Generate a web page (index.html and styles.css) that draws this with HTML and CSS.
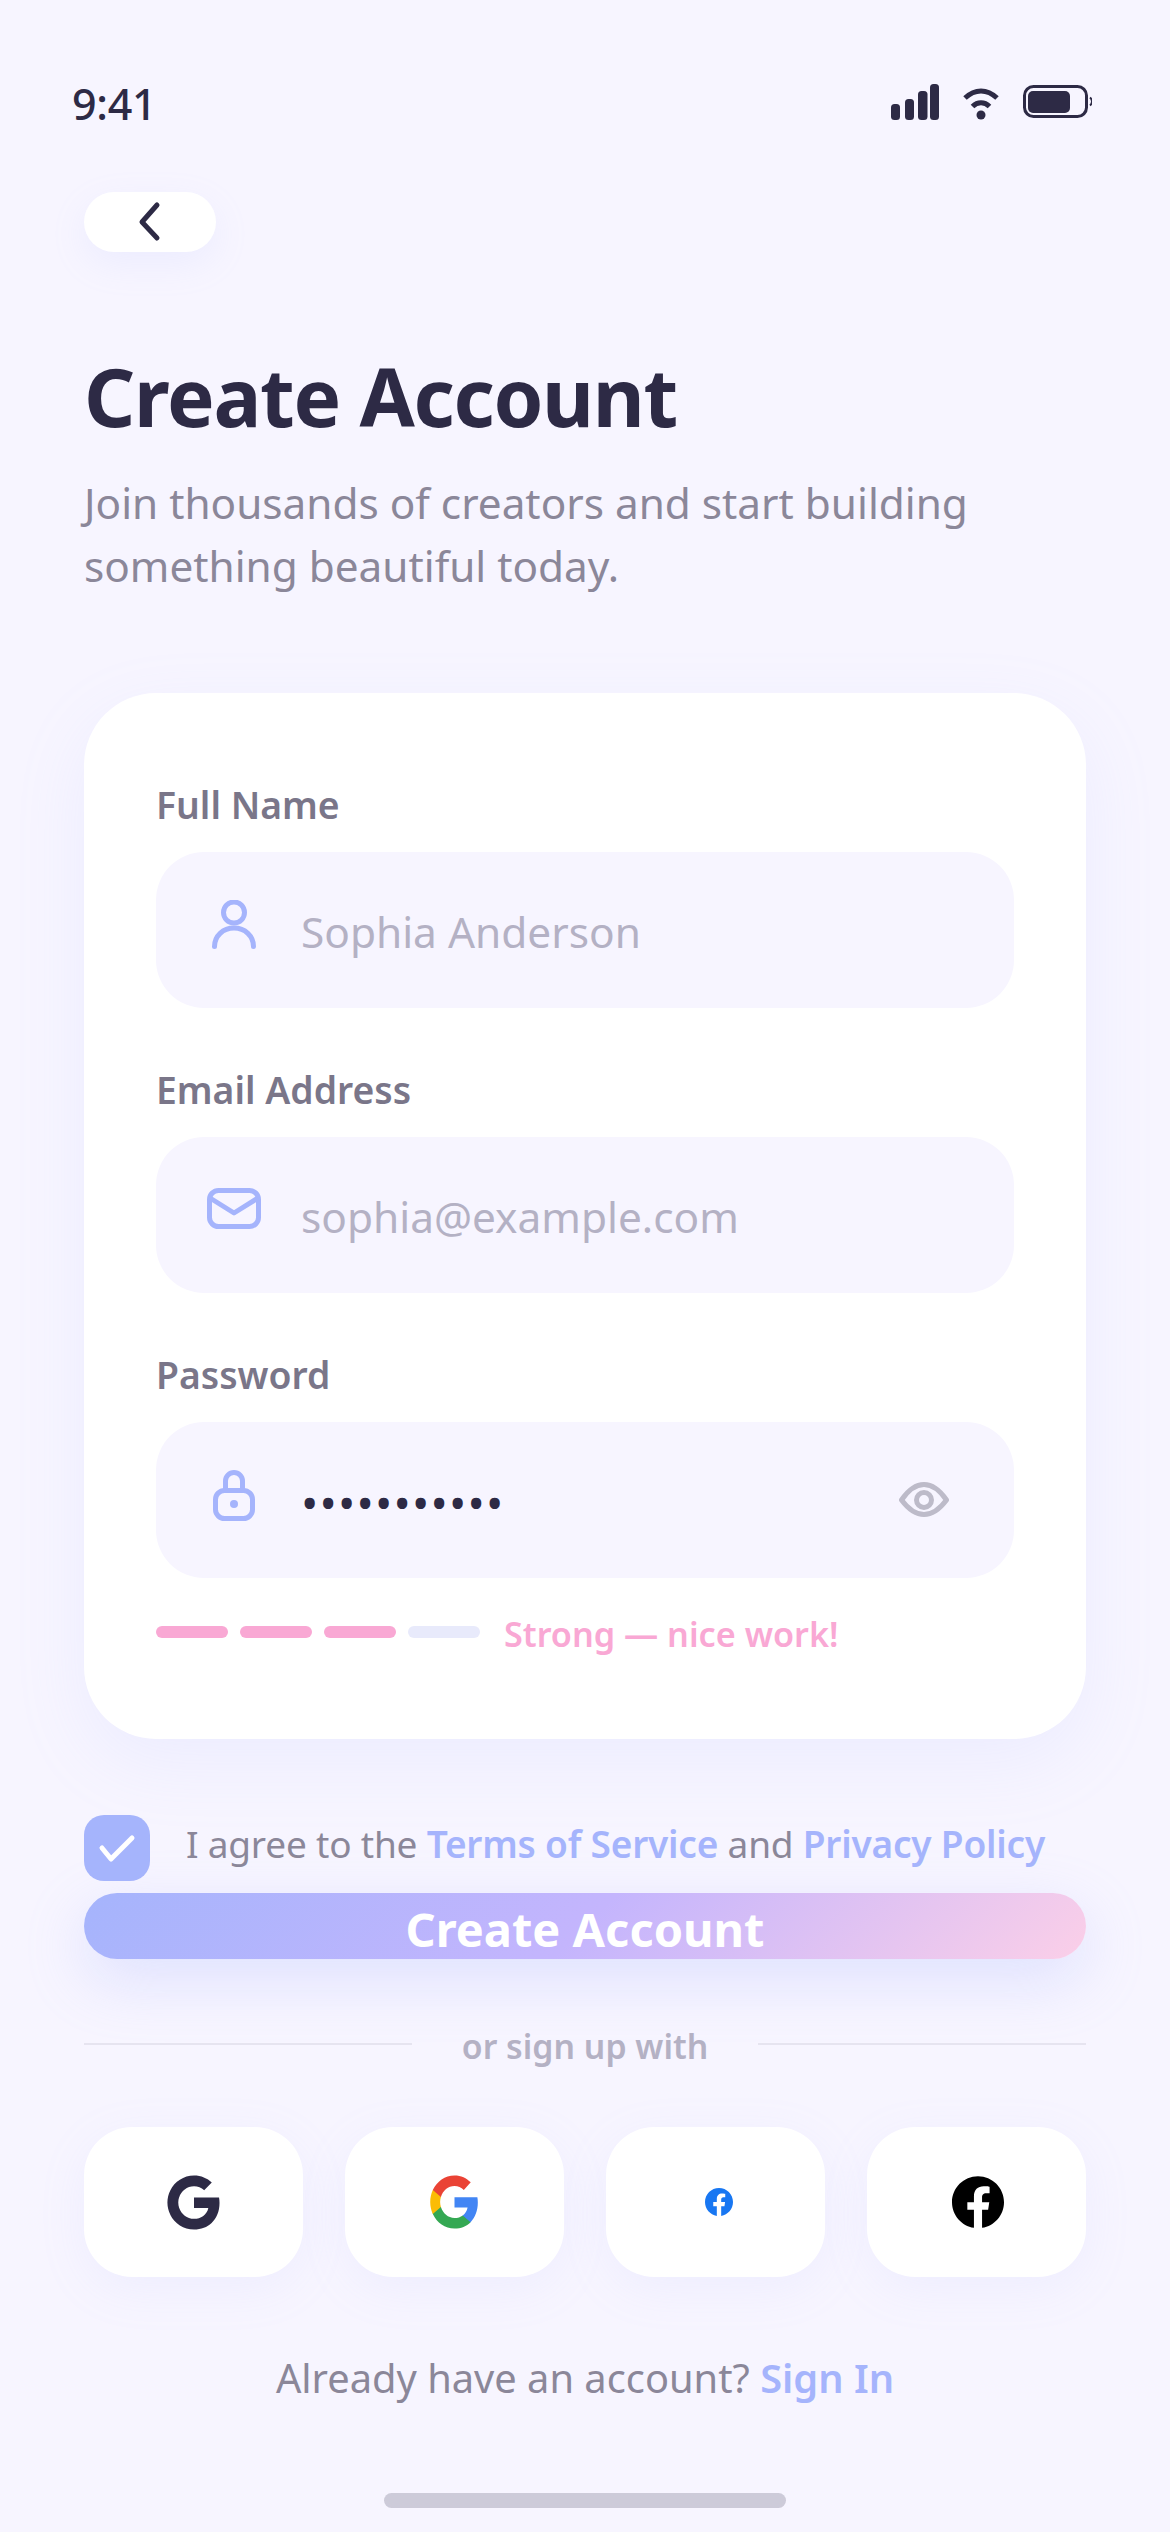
FILE: index.html
```html
<!DOCTYPE html>
<html lang="en">
<head>
<meta charset="utf-8">
<title>Create Account</title>
<link rel="stylesheet" href="styles.css">
</head>
<body>
<div class="screen">
  <header class="status">
    <span class="time">9:41</span>
    <div class="status-icons">
      <svg width="48" height="36" viewBox="0 0 48 36"><g fill="#2D2A45"><rect x="0" y="20" width="9" height="16" rx="3.5"/><rect x="14" y="15" width="9" height="21" rx="3.5"/><rect x="27" y="7" width="9.5" height="29" rx="3.5"/><rect x="39" y="0" width="9" height="36" rx="3.5"/></g></svg>
      <svg width="36" height="36" viewBox="0 0 36 36"><g fill="none" stroke="#2D2A45" stroke-width="5"><path d="M2 14C12 4.5 24 4.5 34 14"/><path d="M9.5 22.5C14.5 17.5 21.5 17.5 26.5 22.5"/></g><circle cx="18" cy="31" r="4.5" fill="#2D2A45"/></svg>
      <svg width="69" height="36" viewBox="0 0 69 36"><rect x="1.5" y="2.5" width="62" height="30" rx="9" fill="none" stroke="#2D2A45" stroke-width="3"/><rect x="5" y="7" width="42" height="22" rx="5" fill="#2D2A45"/><path d="M67 13.500a5 5 0 0 1 0 8" fill="none" stroke="#2D2A45" stroke-width="2"/></svg>
    </div>
  </header>

  <main class="content">
    <button class="back" type="button" aria-label="Back">
      <svg width="30" height="42" viewBox="0 0 30 42"><path d="M22 4 7 21l15 16" fill="none" stroke="#2D2A45" stroke-width="5" stroke-linecap="round" stroke-linejoin="round"/></svg>
    </button>

    <h1 class="title">Create Account</h1>
    <p class="subtitle">Join thousands of creators and start building<br>something beautiful today.</p>

    <section class="card">
      <div class="field">
        <div class="label">Full Name</div>
        <div class="input">
          <svg class="icon" width="60" height="60" viewBox="0 0 60 60"><g fill="none" stroke="#A5B4FC" stroke-width="5" stroke-linecap="round"><circle cx="30" cy="12.500" r="10.500"/><path d="M10.500 46.500C10.500 36 19 28 30 28S49.500 36 49.500 46.500"/></g></svg>
          <span class="placeholder">Sophia Anderson</span>
        </div>
      </div>
      <div class="field">
        <div class="label">Email Address</div>
        <div class="input">
          <svg class="icon" width="60" height="60" viewBox="0 0 60 60"><g fill="none" stroke="#A5B4FC" stroke-width="5" stroke-linejoin="round"><rect x="5.500" y="5.500" width="49" height="36" rx="9"/><path d="M6 13 30 28 54 13"/></g></svg>
          <span class="placeholder">sophia@example.com</span>
        </div>
      </div>
      <div class="field">
        <div class="label">Password</div>
        <div class="input">
          <svg class="icon" width="60" height="60" viewBox="0 0 60 60"><g fill="none" stroke="#A5B4FC" stroke-width="5"><rect x="11.500" y="20.500" width="37" height="28" rx="9"/><path d="M21.500 20V11a8.500 8.500 0 0 1 17 0V20"/></g><circle cx="30" cy="34" r="4" fill="#A5B4FC"/></svg>
          <span class="dots">•••••••••••</span>
          <svg class="eye" width="50" height="60" viewBox="0 0 50 60"><g fill="none" stroke="#BDBBC9" stroke-width="5" stroke-linejoin="round"><path d="M2.500 30C10 19 18 14.500 25 14.500S40 19 47.500 30C40 40 32 44.500 25 44.500S10 40 2.500 30Z"/><circle cx="25" cy="30" r="7.500"/></g></svg>
        </div>
        <div class="strength">
          <span class="seg on"></span><span class="seg on"></span><span class="seg on"></span><span class="seg"></span>
          <span class="strength-text">Strong — nice work!</span>
        </div>
      </div>
    </section>

    <div class="agree">
      <span class="check"><svg width="42" height="36" viewBox="0 0 42 36"><path d="M6 18l9 11L36 8" fill="none" stroke="#fff" stroke-width="5" stroke-linecap="round" stroke-linejoin="round"/></svg></span>
      <span class="agree-text">I agree to the <a>Terms of Service</a> and <a>Privacy Policy</a></span>
    </div>
    <button class="cta" type="button">Create Account</button>

    <div class="divider"><span class="line"></span><span class="divider-text">or sign up with</span><span class="line"></span></div>

    <div class="social">
      <div class="soc"><svg width="58" height="59" viewBox="0 0 24 24" preserveAspectRatio="none"><path fill="#2D2A45" d="M22.560 12.250c0-.78-.07-1.530-.2-2.250H12v4.260h5.920c-.26 1.370-1.040 2.530-2.210 3.310v2.770h3.570c2.080-1.920 3.280-4.740 3.280-8.090z"/><path fill="#2D2A45" d="M12 23c2.970 0 5.460-.98 7.280-2.660l-3.570-2.770c-.98.66-2.230 1.060-3.710 1.060-2.860 0-5.290-1.930-6.160-4.530H2.180v2.840C3.990 20.530 7.700 23 12 23z"/><path fill="#2D2A45" d="M5.840 14.090c-.22-.66-.35-1.360-.35-2.090s.13-1.430.35-2.090V7.070H2.180C1.430 8.550 1 10.220 1 12s.43 3.450 1.180 4.930l2.850-2.220.81-.62z"/><path fill="#2D2A45" d="M12 5.380c1.620 0 3.060.56 4.210 1.640l3.150-3.150C17.450 2.090 14.970 1 12 1 7.700 1 3.990 3.470 2.180 7.070l3.660 2.840c.87-2.600 3.300-4.530 6.160-4.530z"/></svg></div>
      <div class="soc"><svg width="53" height="58" viewBox="0 0 24 24" preserveAspectRatio="none"><path fill="#4285F4" d="M22.560 12.250c0-.78-.07-1.530-.2-2.250H12v4.260h5.920c-.26 1.370-1.040 2.530-2.210 3.310v2.770h3.570c2.080-1.920 3.280-4.740 3.280-8.090z"/><path fill="#34A853" d="M12 23c2.970 0 5.460-.98 7.280-2.660l-3.570-2.770c-.98.66-2.230 1.060-3.710 1.060-2.860 0-5.290-1.930-6.160-4.530H2.180v2.840C3.990 20.530 7.700 23 12 23z"/><path fill="#FBBC05" d="M5.840 14.090c-.22-.66-.35-1.360-.35-2.090s.13-1.430.35-2.090V7.070H2.180C1.430 8.550 1 10.220 1 12s.43 3.450 1.180 4.930l2.850-2.220.81-.62z"/><path fill="#EA4335" d="M12 5.380c1.620 0 3.060.56 4.210 1.640l3.150-3.150C17.450 2.090 14.970 1 12 1 7.700 1 3.990 3.470 2.180 7.070l3.660 2.840c.87-2.600 3.300-4.530 6.160-4.530z"/></svg></div>
      <div class="soc"><svg class="fb-small" width="28" height="28" viewBox="0 0 24 24"><path fill="#1877F2" d="M24 12.073c0-6.627-5.373-12-12-12s-12 5.373-12 12c0 5.990 4.388 10.954 10.125 11.854v-8.385H7.078v-3.470h3.047V9.430c0-3.007 1.792-4.669 4.533-4.669 1.312 0 2.686.235 2.686.235v2.953H15.830c-1.491 0-1.956.925-1.956 1.874v2.250h3.328l-.532 3.470h-2.796v8.385C19.612 23.027 24 18.062 24 12.073z"/></svg></div>
      <div class="soc"><svg class="fb-big" width="52" height="52" viewBox="0 0 24 24"><path fill="#000" d="M24 12.073c0-6.627-5.373-12-12-12s-12 5.373-12 12c0 5.990 4.388 10.954 10.125 11.854v-8.385H7.078v-3.470h3.047V9.430c0-3.007 1.792-4.669 4.533-4.669 1.312 0 2.686.235 2.686.235v2.953H15.830c-1.491 0-1.956.925-1.956 1.874v2.250h3.328l-.532 3.470h-2.796v8.385C19.612 23.027 24 18.062 24 12.073z"/></svg></div>
    </div>

    <p class="signin">Already have an account? <a>Sign In</a></p>
    <div class="home"></div>
  </main>
</div>
</body>
</html>
```
FILE: styles.css
```css
* { box-sizing: border-box; }
html, body { margin: 0; padding: 0; }
body {
  background: #F7F5FF;
  font-family: "Noto Sans", "Open Sans", sans-serif;
  color: #2D2A45;
}
.screen { width: 1170px; height: 2532px; overflow: hidden; }

.status {
  height: 136px;
  padding: 68px 78px 0 72px;
  display: flex;
  justify-content: space-between;
  align-items: center;
}
.time { font-size: 43px; font-weight: 500; line-height: 68px; letter-spacing: -.3px; margin-top: 3px; }
.status-icons { display: flex; gap: 24px; align-items: center; }
.status-icons svg { display: block; }

.content { padding: 0 84px; }

.back {
  margin-top: 56px;
  width: 132px;
  height: 60px;
  border: 0;
  padding: 0;
  border-radius: 30px;
  background: #fff;
  box-shadow: 0 12px 36px rgba(165, 180, 252, .12);
  display: flex;
  align-items: center;
  justify-content: center;
}
.back svg { display: block; }

.title {
  margin: 94px 0 0;
  font-size: 80px;
  line-height: 100px;
  letter-spacing: -1.3px;
  font-weight: 700;
  color: #2D2A45;
}
.subtitle {
  margin: 25px 0 0;
  font-size: 42.3px;
  line-height: 63px;
  font-weight: 400;
  color: #8B8799;
}

.card {
  margin-top: 96px;
  height: 1046px;
  padding: 87px 72px 0;
  background: #fff;
  border-radius: 72px;
  box-shadow: 0 24px 72px rgba(165, 180, 252, .12);
}
.field + .field { margin-top: 57px; }
.label {
  font-size: 37.3px;
  line-height: 50px;
  font-weight: 600;
  color: #7A7689;
  margin-bottom: 22px;
}
.input {
  height: 156px;
  border-radius: 48px;
  background: #F7F5FF;
  padding: 0 65px 0 48px;
  display: flex;
  align-items: center;
  gap: 37px;
}
.icon, .eye { display: block; flex: none; }
.eye { margin-left: auto; }
.placeholder { font-size: 42.4px; line-height: 60px; color: #B4B1C4; margin-top: 4px; }
.dots { font-size: 46px; line-height: 60px; color: #2D2A45; letter-spacing: 1.2px; margin-top: 4px; }

.strength {
  margin-top: 29px;
  height: 50px;
  display: flex;
  align-items: center;
  gap: 12px;
}
.seg { width: 72px; height: 12px; border-radius: 6px; background: #E8EAFB; }
.seg.on { background: #F9A8D4; }
.strength-text {
  margin: 3px 0 0 12px;
  font-size: 34.2px;
  line-height: 50px;
  font-weight: 600;
  color: #F9A8D4;
}

.agree {
  margin-top: 76px;
  display: flex;
  align-items: center;
  gap: 36px;
}
.check {
  width: 66px;
  height: 66px;
  border-radius: 20px;
  background: #A5B4FC;
  display: flex;
  align-items: center;
  justify-content: center;
  flex: none;
}
.check svg { display: block; }
.agree-text { font-size: 37px; letter-spacing: -.2px; line-height: 54px; color: #8B8799; white-space: nowrap; margin-bottom: 8px; }
.agree-text a { color: #A5B4FC; font-weight: 600; }

.cta {
  margin-top: 12px;
  display: block;
  width: 100%;
  height: 66px;
  border: 0;
  padding: 6px 0 0;
  border-radius: 33px;
  background: linear-gradient(135deg, #A5B4FC 0%, #C4B5FD 50%, #FBCFE8 100%);
  box-shadow: 0 20px 60px rgba(165, 180, 252, .3);
  font-family: inherit;
  font-size: 47px;
  font-weight: 700;
  line-height: 60px;
  color: #fff;
}

.divider {
  margin-top: 60px;
  height: 50px;
  display: flex;
  align-items: center;
  gap: 50px;
}
.line { flex: 1; height: 2px; background: #E6E4F0; }
.divider-text { font-size: 33.8px; line-height: 50px; font-weight: 600; color: #B4B1C4; margin-top: 3px; }

.social {
  margin-top: 58px;
  display: grid;
  grid-template-columns: repeat(4, 1fr);
  gap: 42px;
}
.soc {
  height: 150px;
  border-radius: 48px;
  background: #fff;
  box-shadow: 0 12px 48px rgba(165, 180, 252, .1);
  display: flex;
  align-items: center;
  justify-content: center;
}
.soc svg { display: block; }
.fb-small { margin-left: 6px; }
.fb-big { margin-left: 3px; }

.signin {
  margin: 71px 0 0;
  text-align: center;
  font-size: 39.8px;
  line-height: 60px;
  color: #8B8799;
}
.signin a { color: #A5B4FC; font-weight: 600; }

.home {
  margin: 85px auto 0;
  width: 402px;
  height: 15px;
  border-radius: 8px;
  background: #CDCBD9;
}
```
